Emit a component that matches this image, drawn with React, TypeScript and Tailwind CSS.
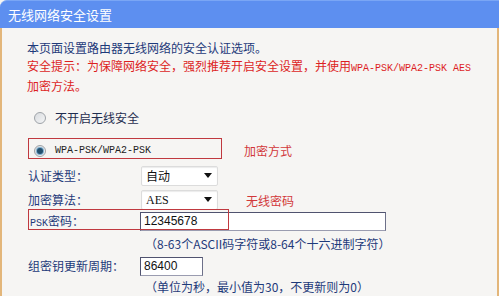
import React from "react";

const cjk = { fontFamily: '"Noto Sans CJK SC", "Noto Sans", sans-serif' };
const mono = { fontFamily: '"Liberation Mono", "DejaVu Sans Mono", monospace' };

function Radio({ checked }: { checked?: boolean }) {
  return (
    <div className="w-[12px] h-[12px] rounded-full border border-[#9ea3a8] bg-gradient-to-br from-[#d9dcdf] to-[#f4f5f6] flex items-center justify-center">
      {checked && <div className="w-[6px] h-[6px] rounded-full bg-[#24506e] ring-1 ring-[#7fb0d0]" />}
    </div>
  );
}

function Select({ value, serif }: { value: string; serif?: boolean }) {
  return (
    <div className="w-[77px] h-[20px] bg-white border border-[#dcdcdc] rounded-[2px] shadow-[inset_0_1px_1px_rgba(0,0,0,0.08)] flex items-center justify-between pl-[4px] pr-[5px]">
      <span
        className="text-[12px] text-[#111]"
        style={serif ? { fontFamily: '"Liberation Serif", serif' } : cjk}
      >
        {value}
      </span>
      <svg width="8" height="5" viewBox="0 0 8 5">
        <path d="M0 0 L8 0 L4 5 Z" fill="#111" />
      </svg>
    </div>
  );
}

export default function App() {
  return (
    <div className="relative w-[499px] h-[296px] overflow-hidden bg-[#f6f5f3] flex flex-col" style={cjk}>
      <div className="h-[28px] shrink-0 bg-[#5d8ff0] rounded-tl-[7px] border-t border-[#7aa6f5] text-white text-[13px] leading-[27px] pl-[8px]">
        无线网络安全设置
      </div>
      <div className="flex-1 border-x-2 border-[#e3b67a] pl-[25px] pt-[11px] text-[12px] text-[#1e3a7a]">
        <div className="leading-[17.5px]">
          <div>本页面设置路由器无线网络的安全认证选项。</div>
          <div className="text-[#dd1f1f]">
            安全提示：为保障网络安全，强烈推荐开启安全设置，并使用
            <span className="text-[10px]" style={mono}>WPA-PSK/WPA2-PSK AES</span>
          </div>
          <div className="text-[#dd1f1f]">加密方法。</div>
        </div>

        <div className="mt-[13px] h-[20px] flex items-center pl-[7px] gap-[9px]">
          <Radio />
          <span className="text-[#1f2d4f]">不开启无线安全</span>
        </div>

        <div className="mt-[13px] h-[20px] flex items-center pl-[7px] gap-[9px]">
          <Radio checked />
          <span className="text-[10px] text-[#222]" style={mono}>WPA-PSK/WPA2-PSK</span>
        </div>

        <div className="mt-[5px] h-[20px] flex items-center">
          <span className="w-[114px] pl-[1px]">认证类型：</span>
          <Select value="自动" />
        </div>

        <div className="mt-[4px] h-[20px] flex items-center">
          <span className="w-[114px] pl-[1px]">加密算法：</span>
          <Select value="AES" serif />
        </div>

        <div className="mt-[2px] h-[19px] flex items-center">
          <span className="w-[113px] pl-[3px]">
            <span className="text-[10px]" style={mono}>PSK</span>密码：
          </span>
          <div className="w-[246px] h-[19px] bg-white border border-[#50536f] border-b-[#9a9cb0] border-r-[#6d7089] flex items-center pl-[3px]">
            <span className="text-[12px] text-[#111]" style={{ fontFamily: '"Liberation Sans", Arial, sans-serif' }}>
              12345678
            </span>
          </div>
        </div>

        <div className="mt-[5px] h-[16px] leading-[16px] pl-[118px]">（8-63个ASCII码字符或8-64个十六进制字符）</div>

        <div className="mt-[5px] h-[19px] flex items-center">
          <span className="w-[113px] pl-[1px]">组密钥更新周期：</span>
          <div className="w-[63px] h-[19px] bg-white border border-[#50536f] border-b-[#9a9cb0] border-r-[#6d7089] flex items-center pl-[3px]">
            <span className="text-[12px] text-[#111]" style={{ fontFamily: '"Liberation Sans", Arial, sans-serif' }}>
              86400
            </span>
          </div>
        </div>

        <div className="mt-[3px] h-[16px] leading-[16px] pl-[118px]">（单位为秒，最小值为30，不更新则为0）</div>
      </div>

      {/* annotations */}
      <div className="absolute left-[28px] top-[138px] w-[194px] h-[21px] border border-[#c0393f]" />
      <div className="absolute left-[244px] top-[143px] text-[12px] text-[#d2383a] leading-[16px]">加密方式</div>
      <div className="absolute left-[246px] top-[193px] text-[12px] text-[#d2383a] leading-[16px]">无线密码</div>
      <div className="absolute left-[28px] top-[209px] w-[201px] h-[21px] border border-[#c0393f]" />
    </div>
  );
}
